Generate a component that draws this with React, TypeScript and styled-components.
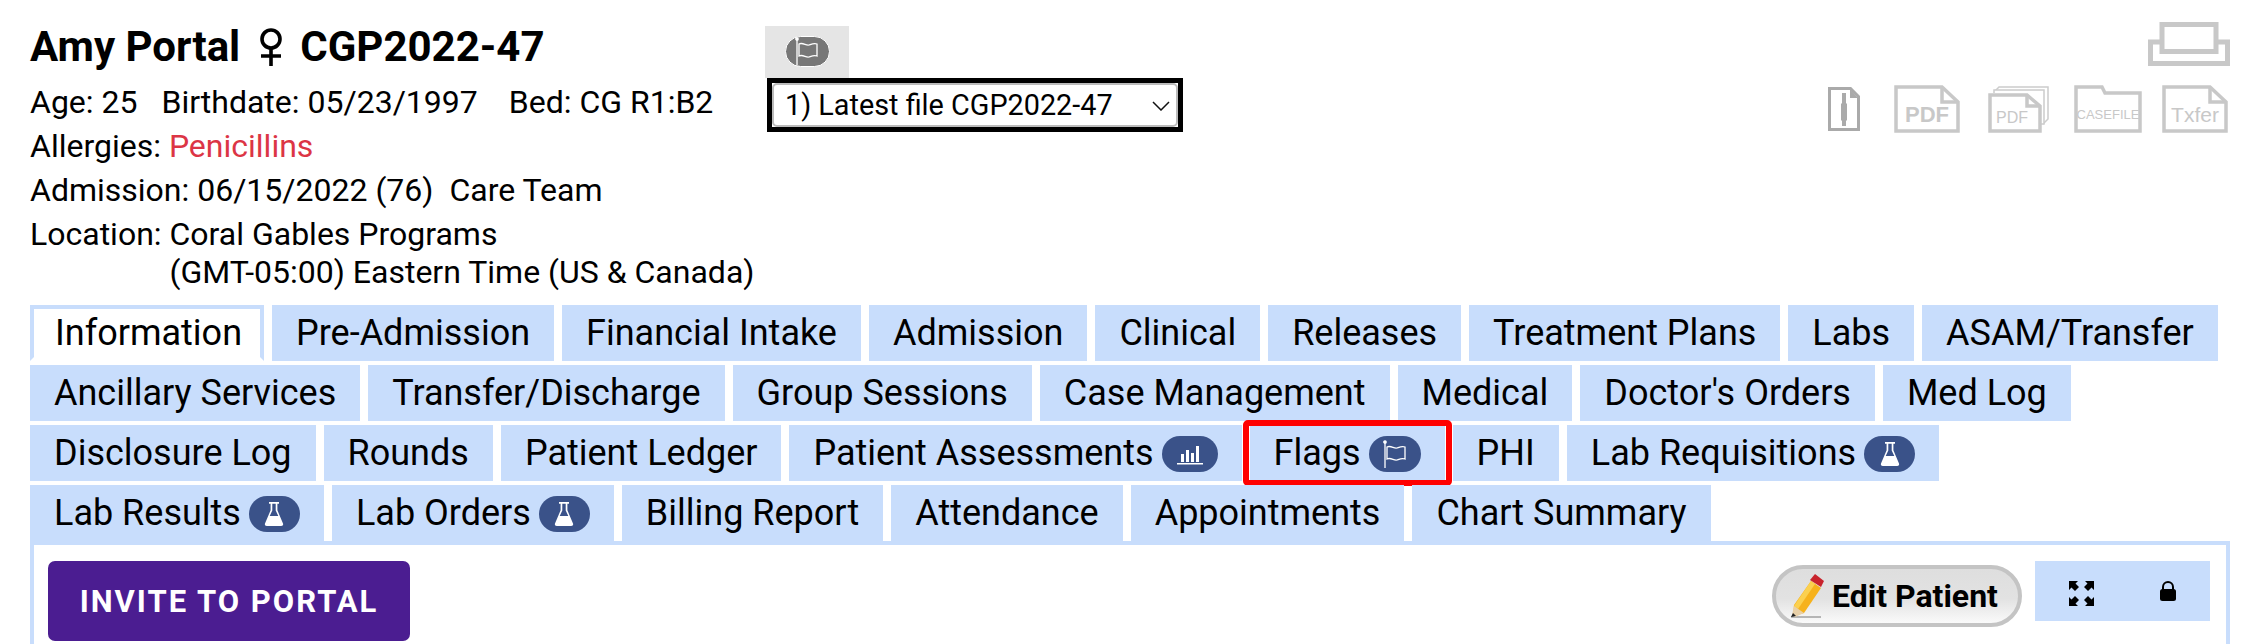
import React from "react";
import styled, { createGlobalStyle } from "styled-components";

const GlobalStyle = createGlobalStyle`
  html, body {
    margin: 0;
    padding: 0;
    background: #fff;
    overflow: hidden;
  }
  body {
    font-family: Roboto, "Liberation Sans", sans-serif;
    color: #000;
  }
`;

type TabInfo = { label: string; badge?: "chart" | "flag" | "flask"; active?: boolean; marked?: boolean };

const rows: TabInfo[][] = [
  [
    { label: "Information", active: true },
    { label: "Pre-Admission" },
    { label: "Financial Intake" },
    { label: "Admission" },
    { label: "Clinical" },
    { label: "Releases" },
    { label: "Treatment Plans" },
    { label: "Labs" },
    { label: "ASAM/Transfer" },
  ],
  [
    { label: "Ancillary Services" },
    { label: "Transfer/Discharge" },
    { label: "Group Sessions" },
    { label: "Case Management" },
    { label: "Medical" },
    { label: "Doctor's Orders" },
    { label: "Med Log" },
  ],
  [
    { label: "Disclosure Log" },
    { label: "Rounds" },
    { label: "Patient Ledger" },
    { label: "Patient Assessments", badge: "chart" },
    { label: "Flags", badge: "flag", marked: true },
    { label: "PHI" },
    { label: "Lab Requisitions", badge: "flask" },
  ],
  [
    { label: "Lab Results", badge: "flask" },
    { label: "Lab Orders", badge: "flask" },
    { label: "Billing Report" },
    { label: "Attendance" },
    { label: "Appointments" },
    { label: "Chart Summary" },
  ],
];

const FlagIcon = () => (
  <svg width="24" height="28" viewBox="0 0 24 28" fill="none" stroke="#fff" strokeWidth="1.3">
    <path d="M2 3v25" />
    <circle cx="2" cy="2" r="1.2" fill="#fff" />
    <path d="M4 7c4-2 7 2 10 1s5-2 8-1v12c-3-1-5 0-8 1s-6-3-10-1z" />
  </svg>
);

const ChartIcon = () => (
  <svg width="26" height="22" viewBox="0 0 26 22" fill="#fff">
    <rect x="0" y="20" width="26" height="1.5" />
    <rect x="4" y="11" width="3" height="8" />
    <rect x="9" y="7" width="3" height="12" />
    <rect x="14" y="10" width="3" height="9" />
    <rect x="19" y="3" width="3" height="16" />
  </svg>
);

const FlaskIcon = () => (
  <svg width="20" height="26" viewBox="0 0 20 26">
    <path d="M5 1h10v1.8h-1.6v6.4L19 22.5c.5 1.5-.3 2.5-1.8 2.5H2.800c-1.500 0-2.300-1-1.800-2.500L6.600 9.200V2.800H5z" fill="#fff" />
    <path d="M8.300 2.800v6.800L5.700 15h8.600l-2.600-5.400V2.800z" fill="#3a5289" />
  </svg>
);

const badgeIcons = { chart: <ChartIcon />, flag: <FlagIcon />, flask: <FlaskIcon /> };
const badgeWidths = { chart: 56, flag: 52, flask: 51 };

const PencilIcon = () => (
  <svg width="36" height="46" viewBox="0 0 36 46">
    <path d="M2 44h30" stroke="#b5b5b5" strokeWidth="2" />
    <path d="M22 8l10 7-17 25-10 3-1-1 1-10z" fill="#f6b21c" />
    <path d="M22 8l4 3-17 25-4-3z" fill="#fbd04f" />
    <path d="M26 1l9 7-3 6-11-7z" fill="#c8232c" />
    <path d="M5 33l10 7-9 4-3-2z" fill="#e8d0a8" />
    <path d="M4 40l3 3-5 1z" fill="#222" />
  </svg>
);

const App = () => {
  return (
    <Page>
      <GlobalStyle />
      <Header>
        <PatientInfo>
          <Title>
            Amy Portal
            <GenderIcon viewBox="0 0 24 38" fill="none" stroke="#000" strokeWidth="3.600">
              <circle cx="12" cy="11" r="9" />
              <path d="M12 20v18M2 28h20" />
            </GenderIcon>
            CGP2022-47
          </Title>
          <InfoLine>
            Age: 25<Spaced $gap={24}>Birthdate: 05/23/1997</Spaced>
            <Spaced $gap={31}>Bed: CG R1:B2</Spaced>
          </InfoLine>
          <InfoLine>
            Allergies: <Allergy>Penicillins</Allergy>
          </InfoLine>
          <InfoLine>
            Admission: 06/15/2022 (76)<Spaced $gap={16}>Care Team</Spaced>
          </InfoLine>
          <LocationLine>
            <span>Location:&nbsp;</span>
            <LocationValue>
              <span>Coral Gables Programs</span>
              <span>(GMT-05:00) Eastern Time (US &amp; Canada)</span>
            </LocationValue>
          </LocationLine>
        </PatientInfo>
        <FileColumn>
          <FlagTab>
            <GreyPill>
              <FlagIcon />
            </GreyPill>
          </FlagTab>
          <SelectFrame>
            <FileSelect defaultValue="latest">
              <option value="latest">1) Latest file CGP2022-47</option>
            </FileSelect>
            <Chevron viewBox="0 0 18 10" fill="none" stroke="#111" strokeWidth="1.500">
              <path d="M1 1l8 8 8-8" />
            </Chevron>
          </SelectFrame>
        </FileColumn>
        <ExportColumn>
          <PrinterIcon viewBox="0 0 82 44" fill="none" stroke="#c8c8c8" strokeWidth="5">
            <path d="M14 2.500h54v27H14z" />
            <path d="M14 20H2.500v21.500h77V20H68" />
          </PrinterIcon>
          <ExportRow>
            <ZipSlot>
              <svg width="32" height="44" viewBox="0 0 32 44">
                <path d="M1.500 1.500h21l8 8v33h-29z" fill="none" stroke="#aaa" strokeWidth="3" />
                <path d="M22 2v9h8z" fill="#aaa" />
                <path d="M14 6h4v10l1 1v16l-1 1v5h-4v-5l-1-1V17l1-1z" fill="#aaa" />
              </svg>
            </ZipSlot>
            <FileGlyph label="PDF" heavy />
            <StackGlyph />
            <FolderSlot>
              <svg width="68" height="48" viewBox="0 0 68 48">
                <path d="M2 2h26l3 6h35v38H2z" fill="none" stroke="#c8c8c8" strokeWidth="3.500" />
                <GlyphText x="34" y="34" fontSize="13" textAnchor="middle">CASEFILE</GlyphText>
              </svg>
            </FolderSlot>
            <FileGlyph label="Txfer" />
          </ExportRow>
        </ExportColumn>
      </Header>
      <TabStrip>
        {rows.map((row, i) => (
          <TabRow key={i}>
            {row.map((tab) => (
              <Tab key={tab.label} $active={tab.active}>
                {tab.label}
                {tab.badge && (
                  <Badge $width={badgeWidths[tab.badge]}>{badgeIcons[tab.badge]}</Badge>
                )}
                {tab.marked && <RedMark />}
              </Tab>
            ))}
          </TabRow>
        ))}
      </TabStrip>
      <Panel>
        <InviteButton>INVITE TO PORTAL</InviteButton>
        <PanelActions>
          <EditButton>
            <PencilIcon />
            Edit Patient
          </EditButton>
          <ToolBox>
            <svg width="25" height="25" viewBox="0 0 25 25" fill="#000">
              <path d="M0 0h9L6.500 2.500 10 6l-4 4-3.500-3.500L0 9z" />
              <path d="M25 0v9l-2.500-2.500L19 10l-4-4 3.500-3.500L16 0z" />
              <path d="M0 25v-9l2.500 2.500L6 15l4 4-3.500 3.500L9 25z" />
              <path d="M25 25h-9l2.500-2.500L15 19l4-4 3.500 3.500L25 16z" />
            </svg>
            <svg width="16" height="20" viewBox="0 0 16 20" fill="#000">
              <path d="M3 9V6a5 5 0 0 1 10 0v3" fill="none" stroke="#000" strokeWidth="2" />
              <rect x="0" y="8" width="16" height="12" rx="2.500" />
            </svg>
          </ToolBox>
        </PanelActions>
      </Panel>
    </Page>
  );
};

const FileGlyph = ({ label, heavy }: { label: string; heavy?: boolean }) => (
  <svg width="66" height="48" viewBox="0 0 66 48">
    <path d="M2 2h46l16 15v29H2z" fill="none" stroke="#c8c8c8" strokeWidth="3.500" />
    <path d="M48 2v15h16" fill="none" stroke="#c8c8c8" strokeWidth="3.500" />
    <GlyphText x="33" y="37" fontSize={heavy ? 22 : 21} fontWeight={heavy ? 900 : 400} textAnchor="middle">
      {label}
    </GlyphText>
  </svg>
);

const StackGlyph = () => (
  <StackSlot>
    <svg width="62" height="48" viewBox="0 0 62 48">
      <path d="M8 8V5l3-3h49v32l-5 5" fill="#fff" stroke="#ccc" strokeWidth="1.500" />
      <path d="M6 8V5h50v34h-3" fill="#fff" stroke="#ccc" strokeWidth="1.500" />
      <path d="M2 10h37l13 11v25H2z" fill="#fff" stroke="#c8c8c8" strokeWidth="3.500" />
      <path d="M39 10v11h13" fill="none" stroke="#c8c8c8" strokeWidth="3.500" />
      <GlyphText x="24" y="38" fontSize="16" textAnchor="middle">PDF</GlyphText>
    </svg>
  </StackSlot>
);

export default App;

const Page = styled.div`
  width: 2250px;
  height: 644px;
  padding: 0 20px 0 30px;
  box-sizing: border-box;
  overflow: hidden;
`;

const Header = styled.div`
  display: flex;
  height: 305px;
`;

const PatientInfo = styled.div`
  width: 735px;
  padding-top: 22px;
  box-sizing: border-box;
  font-size: 32px;
  flex-shrink: 0;
`;

const Title = styled.h1`
  margin: 0 0 8px;
  display: flex;
  align-items: center;
  font-size: 42px;
  line-height: 50px;
  font-weight: 700;
`;

const GenderIcon = styled.svg`
  width: 24px;
  height: 38px;
  margin: 0 17px 0 19px;
`;

const InfoLine = styled.div`
  line-height: 44px;
  white-space: nowrap;
`;

const Spaced = styled.span<{ $gap: number }>`
  margin-left: ${(p) => p.$gap}px;
`;

const Allergy = styled.span`
  color: #dc3545;
`;

const LocationLine = styled.div`
  display: flex;
  white-space: nowrap;
  line-height: 38px;
  margin-top: 3px;
`;

const LocationValue = styled.div`
  display: flex;
  flex-direction: column;
`;

const FileColumn = styled.div`
  width: 420px;
  padding-top: 26px;
  flex-shrink: 0;
`;

const FlagTab = styled.div`
  width: 84px;
  height: 52px;
  background: #e5e5e5;
  display: flex;
  align-items: center;
  justify-content: center;
`;

const GreyPill = styled.div`
  width: 45px;
  height: 31px;
  border-radius: 16px;
  background: #777;
  border: 1px solid #fff;
  box-sizing: border-box;
  display: flex;
  align-items: center;
  justify-content: center;
  margin-top: -2px;
`;

const SelectFrame = styled.div`
  position: relative;
  margin-left: 2px;
  width: 416px;
  height: 54px;
  box-sizing: border-box;
  border: 5px solid #000;
`;

const FileSelect = styled.select`
  appearance: none;
  width: 100%;
  height: 100%;
  box-sizing: border-box;
  border: 2px solid #bbb;
  border-radius: 5px;
  background: #fff;
  padding: 0 0 0 11px;
  font-family: Roboto, sans-serif;
  font-size: 28.800px;
  color: #000;
  outline: none;
`;

const Chevron = styled.svg`
  position: absolute;
  right: 8px;
  top: 18px;
  width: 18px;
  height: 10px;
`;

const ExportColumn = styled.div`
  margin-left: auto;
  padding-top: 22px;
  display: flex;
  flex-direction: column;
  align-items: flex-end;
`;

const PrinterIcon = styled.svg`
  width: 82px;
  height: 44px;
`;

const ExportRow = styled.div`
  display: flex;
  align-items: flex-start;
  margin-top: 19px;
  margin-right: 2px;
`;

const ZipSlot = styled.div`
  margin-top: 2px;
  margin-right: 34px;
`;

const StackSlot = styled.div`
  margin: 0 24px 0 28px;
`;

const FolderSlot = styled.div`
  margin-right: 20px;
`;

const GlyphText = styled.text`
  fill: #c8c8c8;
  font-family: "Liberation Sans", sans-serif;
`;

const TabStrip = styled.div`
  display: flex;
  flex-direction: column;
  gap: 4px;
`;

const TabRow = styled.div`
  display: flex;
  gap: 8px;
`;

const Tab = styled.div<{ $active?: boolean }>`
  position: relative;
  height: 56px;
  box-sizing: border-box;
  padding: 0 24px;
  display: flex;
  align-items: center;
  font-size: 36px;
  white-space: nowrap;
  background: ${(p) => (p.$active ? "#fff" : "#c8ddfc")};
  ${(p) =>
    p.$active &&
    `
    border: 4px solid #c8ddfc;
    border-bottom-color: #fff;
    padding: 0 18px 0 21px;
  `}
`;

const Badge = styled.span<{ $width: number }>`
  width: ${(p) => p.$width}px;
  height: 36px;
  margin-left: 8px;
  margin-top: 2px;
  border-radius: 18px;
  background: #3a5289;
  display: flex;
  align-items: center;
  justify-content: center;
`;

const RedMark = styled.span`
  position: absolute;
  inset: -5px -7px;
  border: 6px solid #ff0000;
  border-radius: 5px;
  pointer-events: none;
`;

const Panel = styled.div`
  height: 120px;
  box-sizing: border-box;
  border: 4px solid #c8ddfc;
  border-bottom: 0;
  padding: 16px 16px 0 14px;
  display: flex;
  justify-content: space-between;
  align-items: flex-start;
`;

const InviteButton = styled.button`
  width: 362px;
  height: 80px;
  border: 0;
  border-radius: 7px;
  background: #4b1d91;
  color: #fff;
  font-family: Roboto, sans-serif;
  font-size: 31px;
  font-weight: 700;
  letter-spacing: 2px;
`;

const PanelActions = styled.div`
  display: flex;
  align-items: flex-start;
  gap: 13px;
`;

const EditButton = styled.button`
  width: 250px;
  height: 62px;
  margin-top: 4px;
  box-sizing: border-box;
  border: 4px solid #c4c4c4;
  border-radius: 31px;
  background: linear-gradient(#dedede 0%, #e2e2e2 55%, #fafafa 100%);
  display: flex;
  align-items: center;
  padding: 0 0 0 13px;
  gap: 7px;
  font-family: Roboto, sans-serif;
  font-size: 32px;
  font-weight: 700;
  color: #000;
  white-space: nowrap;
`;

const ToolBox = styled.div`
  width: 175px;
  height: 60px;
  background: #c8ddfc;
  display: flex;
  align-items: flex-start;
  padding: 20px 34px 0 34px;
  box-sizing: border-box;
  justify-content: space-between;
`;
